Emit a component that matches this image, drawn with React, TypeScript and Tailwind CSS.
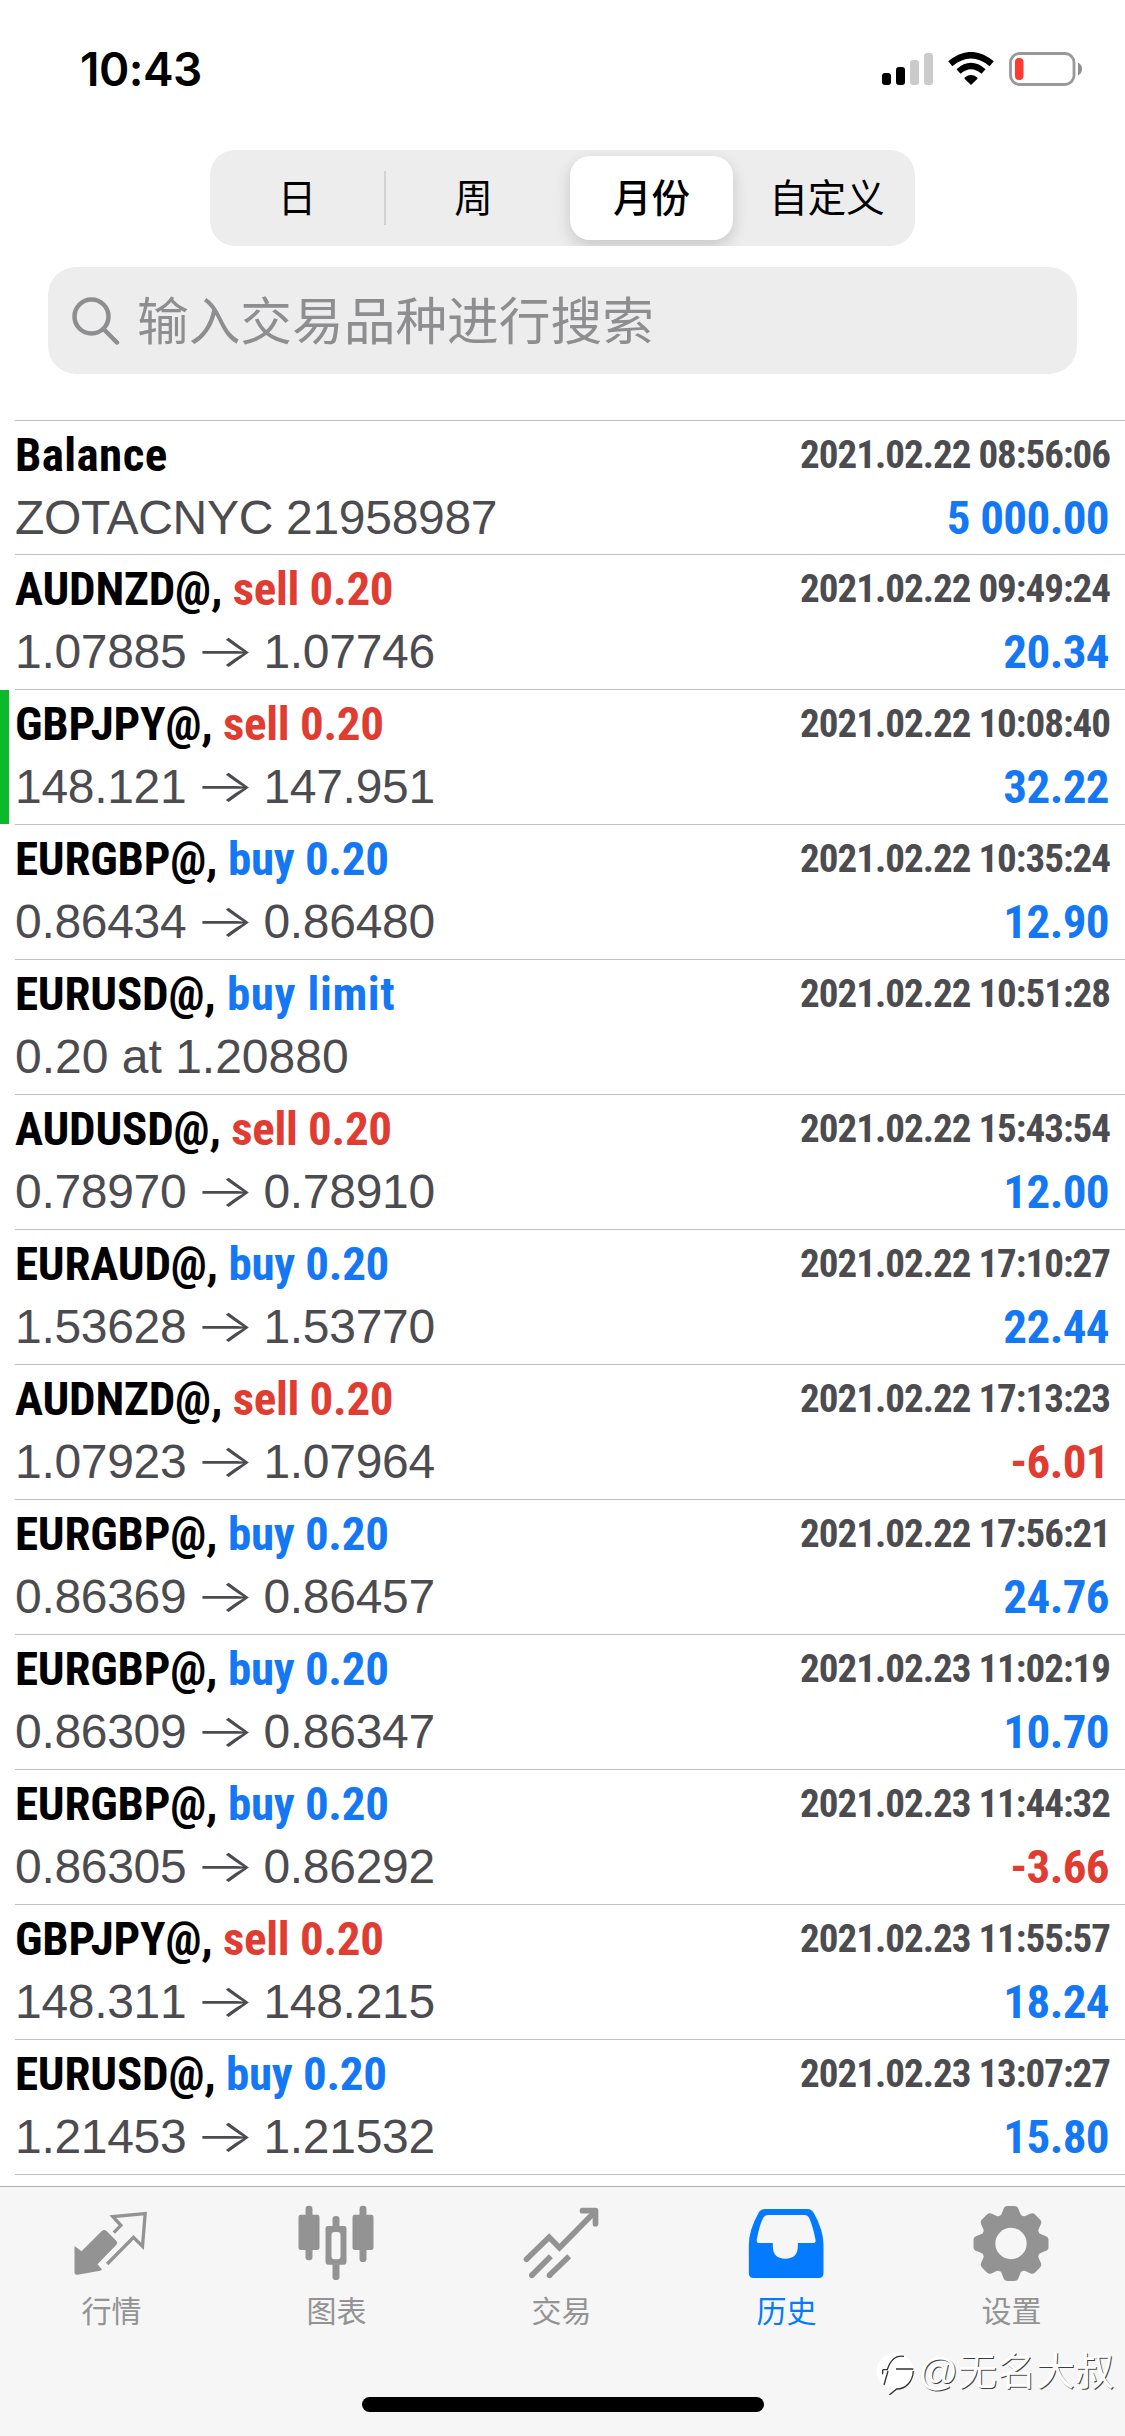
import type { ReactNode } from 'react';
import { clsx } from 'clsx';

type Side = 'buy' | 'sell';

interface HistoryEntry {
  symbol: string;
  side?: Side;
  action?: string;
  /** Free text on the second line, used when there is no open/close pair. */
  note?: string;
  open?: string;
  close?: string;
  time: string;
  profit?: string;
  marked?: boolean;
}

const HISTORY: HistoryEntry[] = [
  { symbol: 'Balance', note: 'ZOTACNYC 21958987', time: '2021.02.22 08:56:06', profit: '5 000.00' },
  { symbol: 'AUDNZD@,', side: 'sell', action: 'sell 0.20', open: '1.07885', close: '1.07746', time: '2021.02.22 09:49:24', profit: '20.34' },
  { symbol: 'GBPJPY@,', side: 'sell', action: 'sell 0.20', open: '148.121', close: '147.951', time: '2021.02.22 10:08:40', profit: '32.22', marked: true },
  { symbol: 'EURGBP@,', side: 'buy', action: 'buy 0.20', open: '0.86434', close: '0.86480', time: '2021.02.22 10:35:24', profit: '12.90' },
  { symbol: 'EURUSD@,', side: 'buy', action: 'buy limit', note: '0.20 at 1.20880', time: '2021.02.22 10:51:28' },
  { symbol: 'AUDUSD@,', side: 'sell', action: 'sell 0.20', open: '0.78970', close: '0.78910', time: '2021.02.22 15:43:54', profit: '12.00' },
  { symbol: 'EURAUD@,', side: 'buy', action: 'buy 0.20', open: '1.53628', close: '1.53770', time: '2021.02.22 17:10:27', profit: '22.44' },
  { symbol: 'AUDNZD@,', side: 'sell', action: 'sell 0.20', open: '1.07923', close: '1.07964', time: '2021.02.22 17:13:23', profit: '-6.01' },
  { symbol: 'EURGBP@,', side: 'buy', action: 'buy 0.20', open: '0.86369', close: '0.86457', time: '2021.02.22 17:56:21', profit: '24.76' },
  { symbol: 'EURGBP@,', side: 'buy', action: 'buy 0.20', open: '0.86309', close: '0.86347', time: '2021.02.23 11:02:19', profit: '10.70' },
  { symbol: 'EURGBP@,', side: 'buy', action: 'buy 0.20', open: '0.86305', close: '0.86292', time: '2021.02.23 11:44:32', profit: '-3.66' },
  { symbol: 'GBPJPY@,', side: 'sell', action: 'sell 0.20', open: '148.311', close: '148.215', time: '2021.02.23 11:55:57', profit: '18.24' },
  { symbol: 'EURUSD@,', side: 'buy', action: 'buy 0.20', open: '1.21453', close: '1.21532', time: '2021.02.23 13:07:27', profit: '15.80' },
];

const SIDE_TEXT: Record<Side, string> = {
  buy: 'text-[#1478f5]',
  sell: 'text-[#e03c31]',
};

const CONDENSED = "font-['Roboto_Condensed','Roboto',sans-serif] font-bold [font-stretch:75%]";
const CJK = "font-['Liberation_Sans','Noto_Sans_CJK_SC',sans-serif]";

function StatusBar() {
  return (
    <header className="flex h-[150px] items-start justify-between pr-[43px] pl-[80px]">
      <span className="mt-[43px] font-['Inter',sans-serif] text-[46px] leading-[52px] font-semibold tracking-[-0.5px] text-black">
        10:43
      </span>
      <svg className="mt-[52px] h-[34px] w-[200px]" viewBox="0 0 200 34">
        <rect x="0" y="21" width="9" height="12" rx="3" />
        <rect x="14" y="15" width="9" height="18" rx="3" />
        <rect x="28" y="8" width="9" height="25" rx="3" fill="#cbcbcb" />
        <rect x="42" y="1" width="9" height="32" rx="3" fill="#cbcbcb" />
        {/* Wi-Fi */}
        <path d="M89 33 L82.8 27 Q82 26 83 25.200 Q89 21 95 25.200 Q96 26 95.200 27 Z" />
        <path d="M76.500 19.500 Q89 8.500 101.500 19.500" fill="none" stroke="#000" strokeWidth="6.200" />
        <path d="M68.300 11.800 Q89 -5.400 109.700 11.800" fill="none" stroke="#000" strokeWidth="6.400" />
        {/* Battery */}
        <rect x="128.500" y="1.500" width="63.500" height="31" rx="9" fill="none" stroke="#999" strokeWidth="2.800" />
        <rect x="133" y="6" width="8.500" height="22" rx="4" fill="#fe3b30" />
        <path d="M196 10.500 Q200 12.500 200 17 Q200 21.500 196 23.500 Z" fill="#8f8f8f" />
      </svg>
    </header>
  );
}

function PeriodControl() {
  return (
    <div className={clsx('mx-auto flex h-24 w-[705px] items-center overflow-hidden rounded-[25px] bg-[#ededed] text-[38.5px] text-black', CJK)}>
      <span className="w-[174px] pt-[2px] text-center">日</span>
      <span className="h-[54px] w-[2px] bg-[#d3d3d5]" />
      <span className="w-[175px] pt-[2px] text-center">周</span>
      <span className="mx-[9px] flex h-[84px] w-[163px] items-center justify-center rounded-[20px] bg-white pt-[2px] font-medium shadow-[0_6px_16px_rgba(0,0,0,0.16)]">
        月份
      </span>
      <span className="flex-1 pt-[2px] pr-[3px] text-center">自定义</span>
    </div>
  );
}

function SearchField() {
  return (
    <div className={clsx('mx-12 mt-[21px] flex h-[107px] items-center rounded-[28px] bg-[#ededee] pl-6 text-[#8e8e90]', CJK)}>
      <svg className="h-12 w-12 shrink-0" viewBox="0 0 48 48" fill="none" stroke="currentColor" strokeWidth="4.500" strokeLinecap="round">
        <circle cx="19.500" cy="19.500" r="17" />
        <path d="M32 32.500 L45 45.500" />
      </svg>
      <span className="ml-[17px] pt-[2px] text-[51.7px] leading-[72px]">输入交易品种进行搜索</span>
    </div>
  );
}

function HistoryRow({ entry }: { entry: HistoryEntry }) {
  const loss = entry.profit?.startsWith('-');

  return (
    <li className="flex h-[135px] first:h-[134px]">
      <div className={clsx('mt-px w-[9px]', entry.marked && 'bg-[#0bb92c]')} />
      <div className="ml-[6px] flex flex-1 justify-between border-t border-[#bfbfc2] pr-[15px]">
        <div>
          <p className={clsx('text-[47px] leading-[68px] text-black', CONDENSED, entry.side ? 'tracking-[-0.2px]' : 'tracking-[0.4px]')}>
            {entry.symbol}
            {entry.side && (
              <span className={clsx(SIDE_TEXT[entry.side], entry.note ? 'tracking-[0.6px]' : 'tracking-[-0.3px]')}> {entry.action}</span>
            )}
          </p>
          <p
            className={clsx(
              "flex font-['Liberation_Sans',sans-serif] text-[48px] leading-[58px] text-[#4c4c50]",
              entry.side && entry.note ? 'tracking-normal' : 'tracking-[-0.3px]',
            )}
          >
            {entry.note ?? (
              <>
                <span className="[font-kerning:none]">{entry.open}</span>
                <span className="w-[77px] -translate-y-[2px] scale-x-[1.38] text-center font-['Inter',sans-serif] text-[46px] font-light">→</span>
                <span className="[font-kerning:none]">{entry.close}</span>
              </>
            )}
          </p>
        </div>
        <div className={clsx('text-right', CONDENSED)}>
          <p className="text-[39px] leading-[68px] tracking-[-1px] text-[#4c4c50]">{entry.time}</p>
          <p className={clsx('pr-px text-[47px] leading-[58px] tracking-[-0.6px]', loss ? 'text-[#e03c31]' : 'text-[#1478f5]')}>{entry.profit}</p>
        </div>
      </div>
    </li>
  );
}

function QuotesIcon() {
  return (
    <svg className="size-20" viewBox="37.500 42 240 240" fill="currentColor">
      <path d="M45 168 L66 184 L127 123 Q134 117 141 123 L171 153 Q176 159 170 165 L114 223 L127 238 Q127 242 122 242 L54 254 Q45 255 45 246 Z" />
      <path d="M163 128 L184 106 L160 80 L257 71 L249 169 L222 142 L143 222" fill="none" stroke="currentColor" strokeWidth="10" />
    </svg>
  );
}

function ChartIcon() {
  return (
    <svg className="size-20" viewBox="52.500 42 240 240" fill="currentColor">
      <rect x="57" y="74" width="63" height="106" rx="7" />
      <rect x="78" y="47" width="21" height="164" rx="10" />
      <rect x="219" y="74" width="63" height="106" rx="7" />
      <rect x="240" y="47" width="21" height="169" rx="10" />
      <path fillRule="evenodd" d="M145 108h49q7 0 7 7v102q0 7-7 7h-49q-7 0-7-7V115q0-7 7-7zM165 126q-9 0-9 9v64q0 9 9 9h9q9 0 9-9v-64q0-9-9-9z" />
      <path d="M159 110V88q0-10 10.500-10T180 88v22zM159 222v38q0 10 10.500 10T180 260v-38z" />
    </svg>
  );
}

function TradeIcon() {
  return (
    <svg className="size-20" viewBox="22.500 42 240 240" fill="none" stroke="currentColor" strokeWidth="17">
      <path d="M36 208 L104 142 L135 173 L237 70" strokeLinecap="round" />
      <path d="M204 62 H243 V101" strokeLinecap="round" strokeLinejoin="round" />
      <circle cx="52" cy="256" r="8.500" fill="currentColor" stroke="none" />
      <circle cx="105" cy="256" r="8.500" fill="currentColor" stroke="none" />
      <path d="M52 256 L109 199 M105 256 L164 199" />
    </svg>
  );
}

function HistoryIcon() {
  return (
    <svg className="size-20" viewBox="37.500 42 240 240" fill="currentColor">
      <path
        fillRule="evenodd"
        d="M91 57 H219 Q231 57 238 69 Q267 120 267 166 V250 Q267 264 253 264 H57 Q43 264 43 250 V166 Q43 120 72 69 Q79 57 91 57 Z
           M101 75 Q91 75 86 84 Q75 105 67 148 Q65 159 75 159 H115 V168 Q115 206 152 206 Q190 206 190 168 V159 H235 Q245 159 243 149 Q235 108 224 84 Q220 75 209 75 Z"
      />
    </svg>
  );
}

function SettingsIcon() {
  return (
    <svg className="size-20" viewBox="37.500 42 240 240" fill="currentColor">
      <circle cx="154.500" cy="160.500" r="68.500" fill="none" stroke="currentColor" strokeWidth="43" />
      {[0, 45, 90, 135, 180, 225, 270, 315].map((angle) => (
        <path
          key={angle}
          transform={`rotate(${angle} 154.5 160.5)`}
          d="M116 86 Q124 79 127 70 L132 57 Q135 48 144 48 H165 Q174 48 177 57 L182 70 Q185 79 193 86 Z"
        />
      ))}
    </svg>
  );
}

const TABS: { label: string; icon: ReactNode; active?: boolean }[] = [
  { label: '行情', icon: <QuotesIcon /> },
  { label: '图表', icon: <ChartIcon /> },
  { label: '交易', icon: <TradeIcon /> },
  { label: '历史', icon: <HistoryIcon />, active: true },
  { label: '设置', icon: <SettingsIcon /> },
];

function TabBar() {
  return (
    <nav className="flex h-[250px] flex-col border-t border-[#aeaeb0] bg-[#f6f6f6] pt-[17px]">
      <div className="mr-px -ml-px grid grid-cols-5">
        {TABS.map((tab) => (
          <div key={tab.label} className={clsx('flex flex-col items-center', tab.active ? 'text-[#047aff]' : 'text-[#939393]', CJK)}>
            {tab.icon}
            <span className="mt-2 text-[30px] leading-10">{tab.label}</span>
          </div>
        ))}
      </div>
      <div className="mx-auto mt-[65px] h-[15px] w-[402px] rounded-full bg-black" />
    </nav>
  );
}

function Watermark() {
  return (
    <div className="absolute top-[2345px] right-[11px] flex items-center">
      <svg className="h-[46px] w-[40px]" viewBox="0 0 120 138" fill="none">
        <path d="M56 12 C86 12 112 32 112 66 C112 96 90 115 66 118 L42 136 L44 118 C18 112 2 92 2 66 C2 36 26 12 56 12 Z" fill="#fff" />
        <path d="M20 62 H34 C42 36 56 18 84 22 M20 62 V76 M36 66 L24 108 M60 60 H112 M112 66 C110 98 90 120 62 120 L40 138" stroke="#333" strokeWidth="4" />
      </svg>
      <span className={clsx('ml-[2px] text-[39px] leading-[54px] text-white [text-shadow:1px_1px_0_rgba(0,0,0,0.75)]', CJK)}>@无名大叔</span>
    </div>
  );
}

export default function App() {
  return (
    <div className="relative flex h-[2436px] w-[1125px] flex-col overflow-hidden bg-white">
      <StatusBar />
      <PeriodControl />
      <SearchField />
      <main className="mt-[46px] flex-1">
        <ul>
          {HISTORY.map((entry) => (
            <HistoryRow key={entry.time} entry={entry} />
          ))}
        </ul>
        <div className="ml-[15px] border-t border-[#bfbfc2]" />
      </main>
      <TabBar />
      <Watermark />
    </div>
  );
}
